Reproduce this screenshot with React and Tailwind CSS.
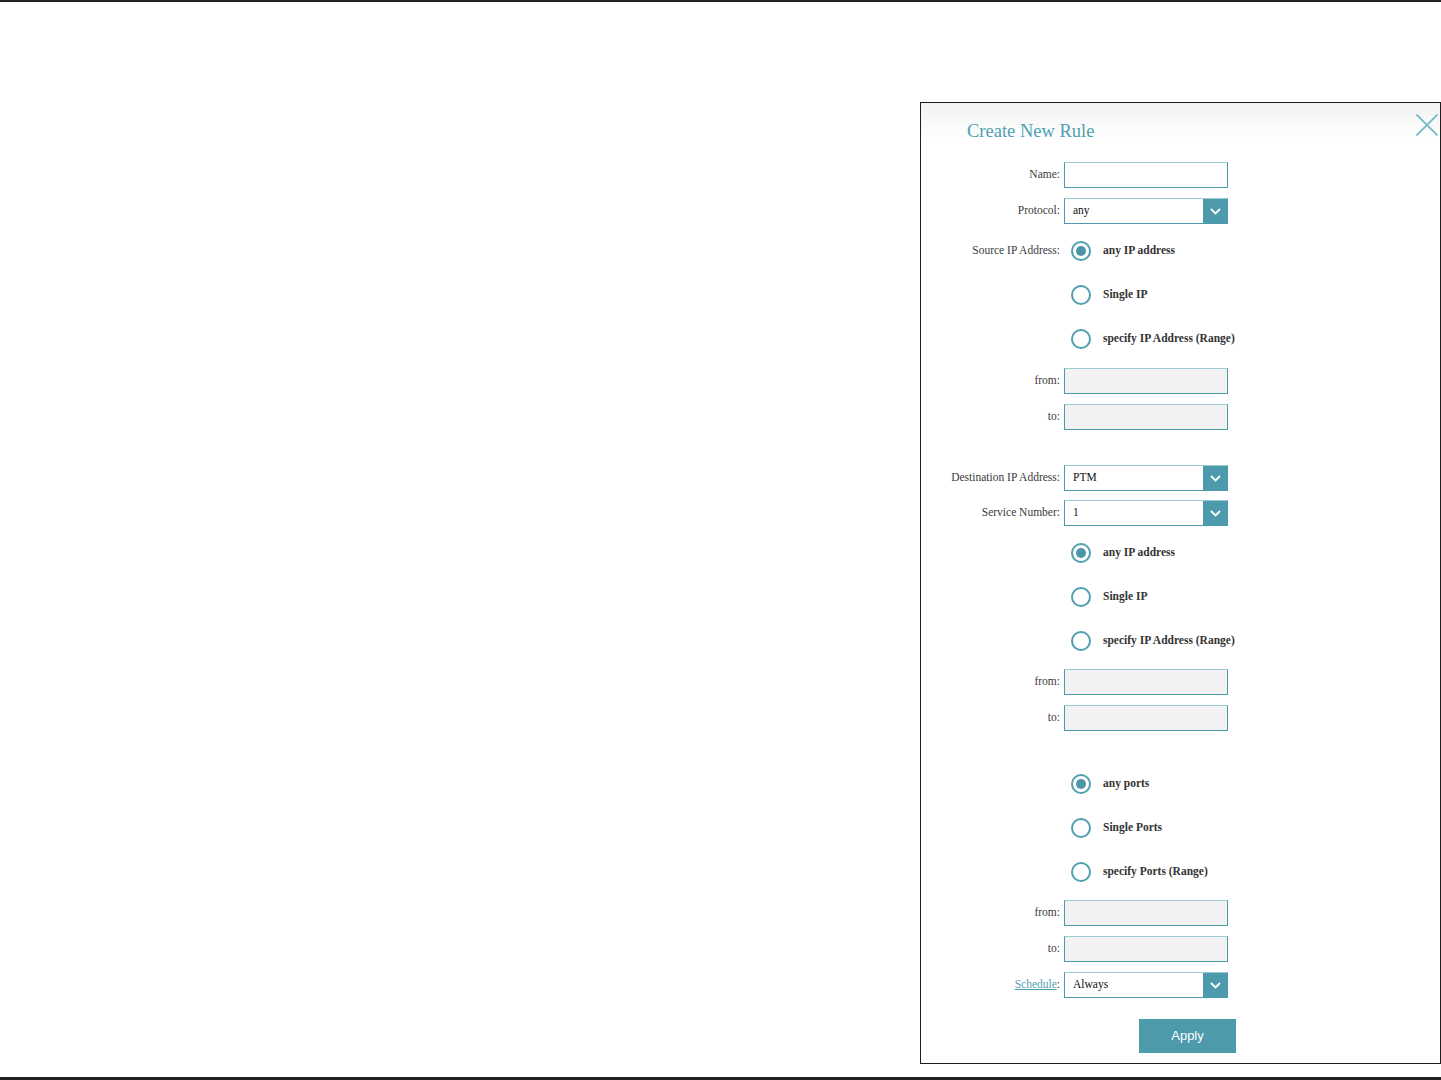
import React from "react";

const serif = { fontFamily: '"Liberation Serif", "Times New Roman", serif' };

function Label({ children }) {
  return (
    <div className="w-[143px] shrink-0 pr-[4px] text-right text-[11.5px] text-[#3a3a3a]">
      {children}
    </div>
  );
}

function TextInput({ gray }) {
  return (
    <div
      className={`h-[26px] w-[164px] border border-[#4a9aab] border-t-[#9ccbd5] ${
        gray ? "bg-[#f2f2f2]" : "bg-white"
      }`}
    />
  );
}

function Select({ value }) {
  return (
    <div className="flex h-[26px] w-[164px] border border-[#4a9aab] border-t-[#9ccbd5] bg-white">
      <div className="flex flex-1 items-center pl-[8px] text-[11.5px] text-[#111]">{value}</div>
      <div className="flex w-[24px] items-center justify-center bg-[#4d9aad]">
        <svg width="11" height="7" viewBox="0 0 11 7">
          <path d="M1 1 L5.5 5.5 L10 1" fill="none" stroke="white" strokeWidth="1.8" />
        </svg>
      </div>
    </div>
  );
}

function Row({ label, children, className = "" }) {
  return (
    <div className={`flex items-center ${className}`}>
      <Label>{label}</Label>
      {children}
    </div>
  );
}

function Radio({ label, checked, rowLabel }) {
  return (
    <div className="flex h-[44px] items-center">
      <Label>{rowLabel}</Label>
      <div className="ml-[7px] flex h-[20px] w-[20px] items-center justify-center rounded-full border-2 border-[#4f9fb0]">
        {checked && <div className="h-[10px] w-[10px] rounded-full bg-[#4a97a9]" />}
      </div>
      <div className="ml-[12px] text-[11.5px] font-bold text-[#333]">{label}</div>
    </div>
  );
}

export default function App() {
  return (
    <div className="flex h-[1080px] flex-col bg-white" style={serif}>
      <div className="h-[2px] w-full bg-[#222]" />
      <div className="flex flex-1 justify-end pt-[100px]">
        <div className="relative h-[962px] w-[521px] border border-[#1e1e1e] bg-gradient-to-b from-[#f1f2f2] via-white via-[4%] to-white">
          <svg className="absolute left-[495px] top-[11px]" width="22" height="22" viewBox="0 0 22 22">
            <path d="M0.5 0.5 L21.5 21.5 M21.5 0.5 L0.5 21.5" stroke="#6db6c4" strokeWidth="1.6" fill="none" />
          </svg>
          <div className="pl-[46px] pt-[17px] text-[18.5px] leading-[22px] text-[#4f9fb3]">
            Create New Rule
          </div>
          <div className="flex flex-col pt-[20px]">
            <Row label="Name:">
              <TextInput />
            </Row>
            <Row label="Protocol:" className="mt-[10px]">
              <Select value="any" />
            </Row>
            <div className="mt-[5px]">
              <Radio rowLabel="Source IP Address:" label="any IP address" checked />
              <Radio label="Single IP" />
              <Radio label="specify IP Address (Range)" />
            </div>
            <Row label="from:" className="mt-[7px]">
              <TextInput gray />
            </Row>
            <Row label="to:" className="mt-[10px]">
              <TextInput gray />
            </Row>
            <Row label="Destination IP Address:" className="mt-[35px]">
              <Select value="PTM" />
            </Row>
            <Row label="Service Number:" className="mt-[9px]">
              <Select value="1" />
            </Row>
            <div className="mt-[5px]">
              <Radio label="any IP address" checked />
              <Radio label="Single IP" />
              <Radio label="specify IP Address (Range)" />
            </div>
            <Row label="from:" className="mt-[6px]">
              <TextInput gray />
            </Row>
            <Row label="to:" className="mt-[10px]">
              <TextInput gray />
            </Row>
            <div className="mt-[31px]">
              <Radio label="any ports" checked />
              <Radio label="Single Ports" />
              <Radio label="specify Ports (Range)" />
            </div>
            <Row label="from:" className="mt-[6px]">
              <TextInput gray />
            </Row>
            <Row label="to:" className="mt-[10px]">
              <TextInput gray />
            </Row>
            <Row
              label={
                <>
                  <span className="text-[#4f9fb3] underline">Schedule</span>:
                </>
              }
              className="mt-[10px]"
            >
              <Select value="Always" />
            </Row>
            <div className="mt-[21px] pl-[218px]">
              <div
                className="flex h-[34px] w-[97px] items-center justify-center bg-[#4d9aad] text-[13px] text-white"
                style={{ fontFamily: '"Liberation Sans", Arial, sans-serif' }}
              >
                Apply
              </div>
            </div>
          </div>
        </div>
      </div>
      <div className="mt-[13px] h-[3px] w-full bg-[#222]" />
    </div>
  );
}
